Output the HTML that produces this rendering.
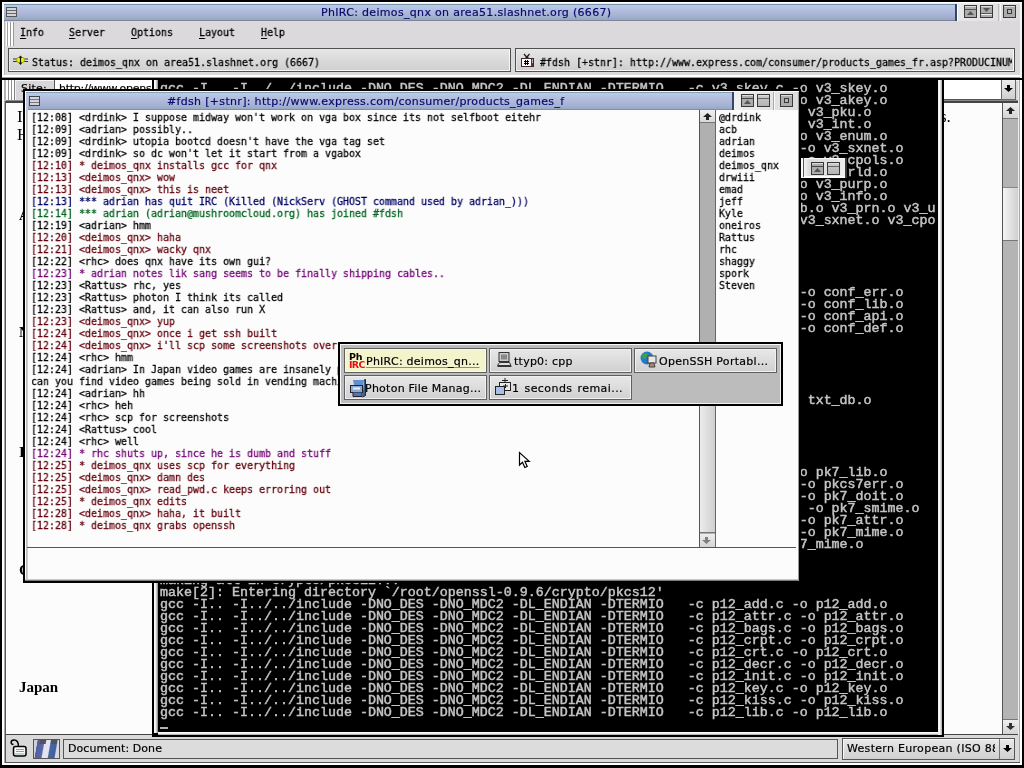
<!DOCTYPE html>
<html><head><meta charset="utf-8"><title>PhIRC</title>
<style>
html,body{margin:0;padding:0}
body{width:1024px;height:768px;position:relative;overflow:hidden;background:#fff;font-family:"DejaVu Sans","Liberation Sans",sans-serif;font-size:11px;color:#000}
div,pre,span{position:absolute;box-sizing:border-box;margin:0;padding:0}
pre span{position:static}
.mono{font-family:"DejaVu Sans Mono","Liberation Mono",monospace;font-size:11px;line-height:12px;white-space:pre;transform:scaleX(0.906);transform-origin:0 0;-webkit-text-stroke:0.3px currentColor}
.term{font-family:"Liberation Mono","DejaVu Sans Mono",monospace;font-size:12.4px;line-height:12px;white-space:pre;color:#c4c4c4;-webkit-text-stroke:0.45px #c4c4c4;transform:scaleX(1.0753);transform-origin:0 0}
.mn u{text-decoration:underline;text-underline-offset:2px;text-decoration-thickness:1px}
.term,.mono,.ttl,.pg{will-change:transform}
.tbar{background:linear-gradient(#b0d0e8,#b6bade 38%,#a2b4d2 72%,#98a4c2)}
.ttl{font-family:"DejaVu Sans","Liberation Sans",sans-serif;font-size:11px;color:#0a0a6a;white-space:pre;-webkit-text-stroke:0.2px currentColor}
.ttl.pl{color:#000;letter-spacing:0.25px}
.wbtn{width:13px;height:13px;background:#acacac;border:1px solid #383838;box-shadow:inset 0 1px 0 #ddd}
</style></head><body>

<!-- ===== BROWSER (bottom layer) ===== -->
<div id="browser" style="left:0;top:0;width:1024px;height:768px;background:#000">
 <div style="left:2px;top:0;width:1020px;height:765px;background:#fff"></div>
 <div style="left:4px;top:0;width:1016px;height:763px;background:#a8a8a8"></div>
 <div style="left:5px;top:0;width:1014px;height:763px;background:#585858"></div>
 <div style="left:6px;top:0;width:1013px;height:762px;background:#d9d9d9"></div>
 <!-- toolbar row -->
 <div style="left:4px;top:80px;width:1015px;height:21px;background:#b4b4b4"></div>
 <div style="left:6px;top:80px;width:1013px;height:21px;background:#d8d6d8"></div>
 <div style="left:6px;top:80px;width:1013px;height:1px;background:#f4f4f4"></div>
 <div style="left:6px;top:80px;width:2px;height:20px;background:#fff"></div>
 <div style="left:8px;top:80px;width:1px;height:20px;background:#909090"></div>
 <div style="left:9px;top:80px;width:2px;height:20px;background:#fff"></div>
 <div style="left:11px;top:80px;width:1px;height:20px;background:#909090"></div>
 <div style="left:12px;top:80px;width:2px;height:20px;background:#fff"></div>
 <div style="left:14px;top:80px;width:1px;height:20px;background:#808080"></div>
 <div style="left:15px;top:80px;width:1px;height:20px;background:#f4f4f4"></div>
 <div class="ttl" style="left:21px;top:82px;color:#000;font-size:11px;letter-spacing:0.2px">Site:</div>
 <div style="left:54px;top:79px;width:948px;height:21px;background:#fff;border:1px solid #555;border-right:none"></div>
 <div class="ttl" style="left:59px;top:82px;color:#000;font-size:11px;letter-spacing:-0.25px;width:93px;overflow:hidden">http://www.opens</div>
 <div style="left:1001px;top:80px;width:15px;height:20px;background:linear-gradient(#ececec,#d0d0d0);border:1px solid #666;border-top:none"></div>
 <svg style="position:absolute;left:1004px;top:85px" width="9" height="7" viewBox="0 0 9 7"><path d="M3 0h3v3h3l-4.500 4-4.500-4h3z" fill="#000"/></svg>
 <div style="left:6px;top:100px;width:1013px;height:1px;background:#888"></div>
 <div style="left:6px;top:101px;width:1013px;height:2px;background:#444"></div>
 <!-- page -->
 <div style="left:6px;top:103px;width:997px;height:631px;background:#fbfcfb"></div>
 <div style="left:6px;top:734px;width:1013px;height:1px;background:#444"></div>
 <!-- page text fragments -->
 <div style="left:17px;top:107px;font:17px 'Liberation Serif',serif" class="pg">I</div>
 <div style="left:17px;top:125px;font:17px 'Liberation Serif',serif" class="pg">H</div>
 <div style="left:19px;top:207px;font:bold 15px 'Liberation Serif',serif" class="pg">A</div>
 <div style="left:19px;top:324px;font:bold 15px 'Liberation Serif',serif" class="pg">N</div>
 <div style="left:19px;top:444px;font:bold 15px 'Liberation Serif',serif" class="pg">I</div>
 <div style="left:19px;top:562px;font:bold 15px 'Liberation Serif',serif" class="pg">C</div>
 <div style="left:19px;top:679px;font:bold 15px 'Liberation Serif',serif" class="pg">Japan</div>
 <div style="left:940px;top:107px;font:17px 'Liberation Serif',serif" class="pg">s.</div>
 <!-- scrollbar -->
 <div style="left:1002px;top:103px;width:1px;height:631px;background:#555"></div>
 <div style="left:1003px;top:103px;width:15px;height:631px;background:#b4b4b4"></div>
 <div style="left:1003px;top:103px;width:15px;height:16px;background:linear-gradient(#eee,#d4d4d4);border-bottom:1px solid #777"></div>
 <svg style="position:absolute;left:1006px;top:107px" width="9" height="7" viewBox="0 0 9 7"><path d="M4.500 0l4.500 4h-3v3h-3v-3h-3z" fill="#222"/></svg>
 <div style="left:1003px;top:187px;width:15px;height:54px;background:linear-gradient(90deg,#f4f4f4,#d0d0d0);border-top:1px solid #888;border-bottom:1px solid #777"></div>
 <div style="left:1003px;top:719px;width:15px;height:15px;background:linear-gradient(#eee,#d4d4d4);border-top:1px solid #777"></div>
 <svg style="position:absolute;left:1006px;top:723px" width="9" height="7" viewBox="0 0 9 7"><path d="M3 0h3v3h3l-4.500 4-4.500-4h3z" fill="#333"/></svg>
 <div style="left:1018px;top:80px;width:1px;height:682px;background:#eee"></div>
 <!-- status bar -->
 <div style="left:6px;top:735px;width:1013px;height:27px;background:#d9d9d9"></div>
 <div style="left:6px;top:762px;width:1014px;height:1px;background:#555"></div>
 <svg style="position:absolute;left:9px;top:738px" width="19" height="20" viewBox="0 0 19 20"><path d="M4.500 6.500C1.500 6.500 1 2 5 2C8.500 2 9.500 4 9.500 8.500" fill="none" stroke="#000" stroke-width="1.500"/><rect x="4.500" y="8.500" width="12.500" height="9.500" rx="2" fill="#f6faf6" stroke="#000" stroke-width="1.500"/><path d="M7 11.500h8M7 13.500h8" stroke="#9a9a9a" stroke-width="1"/><path d="M6 16h9.500" stroke="#b4c8bc" stroke-width="1.500"/></svg>
 <div style="left:33px;top:739px;width:27px;height:20px;background:linear-gradient(100deg,#d0d0d8 0,#d0d0d8 12%,#5060a0 14%,#5868a8 36%,#e4e4f0 40%,#e4e4f0 58%,#4868a0 62%,#4060a0 82%,#d8d8e0 86%);border:1px solid #555"></div>
 <div style="left:34px;top:740px;width:25px;height:4px;background:linear-gradient(100deg,rgba(0,0,0,0) 22%,#50545c 25%,#50545c 46%,rgba(0,0,0,0) 50%,rgba(0,0,0,0) 66%,#50545c 70%,#50545c 88%,rgba(0,0,0,0) 92%)"></div>
 <div style="left:63px;top:739px;width:775px;height:20px;background:#dcdcdc;border:1px solid #555"></div>
 <div class="ttl" style="left:68px;top:742px;color:#000;font-size:11px;letter-spacing:0.06px">Document: Done</div>
 <div style="left:842px;top:738px;width:173px;height:22px;background:linear-gradient(#e8e8e8,#d0d0d0);border:1px solid #555;box-shadow:inset 1px 1px 0 #f8f8f8"></div>
 <div style="left:999px;top:739px;width:1px;height:20px;background:#777"></div>
 <div class="ttl" style="left:847px;top:742px;color:#000;font-size:11px;letter-spacing:0.3px;width:148px;overflow:hidden">Western European (ISO 8859-1)</div>
 <svg style="position:absolute;left:1003px;top:745px" width="9" height="7" viewBox="0 0 9 7"><path d="M3 0h3v3h3l-4.500 4-4.500-4h3z" fill="#000"/></svg>
</div>

<!-- ===== TERMINAL ===== -->
<div id="terminal" style="left:152px;top:60px;width:792px;height:677px;background:#000">
 <div style="left:2px;top:0;width:4px;height:673px;background:linear-gradient(90deg,#fff,#f0f0f0 40%,#888)"></div>
 <div style="left:6px;top:672px;width:782px;height:3px;background:linear-gradient(#fff,#eee 50%,#999)"></div>
 <div style="left:786px;top:0;width:4px;height:675px;background:linear-gradient(90deg,#e8e8e8,#fff 40%,#aaa)"></div>
 <pre class="term" style="left:8px;top:23px">gcc -I.. -I../../include -DNO_DES -DNO_MDC2 -DL_ENDIAN -DTERMIO   -c v3_skey.c -o v3_skey.o
gcc -I.. -I../../include -DNO_DES -DNO_MDC2 -DL_ENDIAN -DTERMIO   -c v3_akey.c -o v3_akey.o
gcc -I.. -I../../include -DNO_DES -DNO_MDC2 -DL_ENDIAN -DTERMIO   -c v3_pku.c -o v3_pku.o
gcc -I.. -I../../include -DNO_DES -DNO_MDC2 -DL_ENDIAN -DTERMIO   -c v3_int.c -o v3_int.o
gcc -I.. -I../../include -DNO_DES -DNO_MDC2 -DL_ENDIAN -DTERMIO   -c v3_enum.c -o v3_enum.o
gcc -I.. -I../../include -DNO_DES -DNO_MDC2 -DL_ENDIAN -DTERMIO   -c v3_sxnet.c -o v3_sxnet.o
gcc -I.. -I../../include -DNO_DES -DNO_MDC2 -DL_ENDIAN -DTERMIO   -c v3_cpols.c -o v3_cpols.o
gcc -I.. -I../../include -DNO_DES -DNO_MDC2 -DL_ENDIAN -DTERMIO   -c v3_crld.c -o v3_crld.o
gcc -I.. -I../../include -DNO_DES -DNO_MDC2 -DL_ENDIAN -DTERMIO   -c v3_purp.c -o v3_purp.o
gcc -I.. -I../../include -DNO_DES -DNO_MDC2 -DL_ENDIAN -DTERMIO   -c v3_info.c -o v3_info.o
ar r ../../libcrypto.a v3_bcons.o v3_bitst.o v3_conf.o v3_extku.o v3_ia5.o v3_lib.o v3_prn.o v3_u
tl.o v3err.o v3_genn.o v3_alt.o v3_skey.o v3_akey.o v3_pku.o v3_int.o v3_enum.o v3_sxnet.o v3_cpo
ls.o v3_crld.o v3_purp.o v3_info.o
ranlib ../../libcrypto.a
make[2]: Leaving directory `/root/openssl-0.9.6/crypto/x509v3'
making all in crypto/conf...
make[2]: Entering directory `/root/openssl-0.9.6/crypto/conf'
gcc -I.. -I../../include -DNO_DES -DNO_MDC2 -DL_ENDIAN -DTERMIO   -c conf_err.c -o conf_err.o
gcc -I.. -I../../include -DNO_DES -DNO_MDC2 -DL_ENDIAN -DTERMIO   -c conf_lib.c -o conf_lib.o
gcc -I.. -I../../include -DNO_DES -DNO_MDC2 -DL_ENDIAN -DTERMIO   -c conf_api.c -o conf_api.o
gcc -I.. -I../../include -DNO_DES -DNO_MDC2 -DL_ENDIAN -DTERMIO   -c conf_def.c -o conf_def.o
ar r ../../libcrypto.a conf_err.o conf_lib.o conf_api.o conf_def.o
ranlib ../../libcrypto.a
make[2]: Leaving directory `/root/openssl-0.9.6/crypto/conf'
making all in crypto/txt_db...
make[2]: Entering directory `/root/openssl-0.9.6/crypto/txt_db'
gcc -I.. -I../../include -DNO_DES -DNO_MDC2 -DL_ENDIAN -DTERMIO   -c txt_db.c -o txt_db.o
ar r ../../libcrypto.a txt_db.o
ranlib ../../libcrypto.a
make[2]: Leaving directory `/root/openssl-0.9.6/crypto/txt_db'
making all in crypto/pkcs7...
make[2]: Entering directory `/root/openssl-0.9.6/crypto/pkcs7'
gcc -I.. -I../../include -DNO_DES -DNO_MDC2 -DL_ENDIAN -DTERMIO   -c pk7_lib.c -o pk7_lib.o
gcc -I.. -I../../include -DNO_DES -DNO_MDC2 -DL_ENDIAN -DTERMIO   -c pkcs7err.c -o pkcs7err.o
gcc -I.. -I../../include -DNO_DES -DNO_MDC2 -DL_ENDIAN -DTERMIO   -c pk7_doit.c -o pk7_doit.o
gcc -I.. -I../../include -DNO_DES -DNO_MDC2 -DL_ENDIAN -DTERMIO   -c pk7_smime.c -o pk7_smime.o
gcc -I.. -I../../include -DNO_DES -DNO_MDC2 -DL_ENDIAN -DTERMIO   -c pk7_attr.c -o pk7_attr.o
gcc -I.. -I../../include -DNO_DES -DNO_MDC2 -DL_ENDIAN -DTERMIO   -c pk7_mime.c -o pk7_mime.o
ar r ../../libcrypto.a pk7_lib.o pkcs7err.o pk7_doit.o pk7_smime.o pk7_attr.o pk7_mime.o
ranlib ../../libcrypto.a
make[2]: Leaving directory `/root/openssl-0.9.6/crypto/pkcs7'
making all in crypto/pkcs12...
make[2]: Entering directory `/root/openssl-0.9.6/crypto/pkcs12'
gcc -I.. -I../../include -DNO_DES -DNO_MDC2 -DL_ENDIAN -DTERMIO   -c p12_add.c -o p12_add.o
gcc -I.. -I../../include -DNO_DES -DNO_MDC2 -DL_ENDIAN -DTERMIO   -c p12_attr.c -o p12_attr.o
gcc -I.. -I../../include -DNO_DES -DNO_MDC2 -DL_ENDIAN -DTERMIO   -c p12_bags.c -o p12_bags.o
gcc -I.. -I../../include -DNO_DES -DNO_MDC2 -DL_ENDIAN -DTERMIO   -c p12_crpt.c -o p12_crpt.o
gcc -I.. -I../../include -DNO_DES -DNO_MDC2 -DL_ENDIAN -DTERMIO   -c p12_crt.c -o p12_crt.o
gcc -I.. -I../../include -DNO_DES -DNO_MDC2 -DL_ENDIAN -DTERMIO   -c p12_decr.c -o p12_decr.o
gcc -I.. -I../../include -DNO_DES -DNO_MDC2 -DL_ENDIAN -DTERMIO   -c p12_init.c -o p12_init.o
gcc -I.. -I../../include -DNO_DES -DNO_MDC2 -DL_ENDIAN -DTERMIO   -c p12_key.c -o p12_key.o
gcc -I.. -I../../include -DNO_DES -DNO_MDC2 -DL_ENDIAN -DTERMIO   -c p12_kiss.c -o p12_kiss.o
gcc -I.. -I../../include -DNO_DES -DNO_MDC2 -DL_ENDIAN -DTERMIO   -c p12_lib.c -o p12_lib.o</pre>
 <div style="left:8px;top:667px;width:8px;height:2px;background:#b0b0b0"></div>
</div>

<!-- ===== PHIRC MAIN ===== -->
<div id="phirc" style="left:0;top:0;width:1024px;height:80px;background:#000">
 <div style="left:2px;top:2px;width:1020px;height:76px;background:#fff"></div>
 <div style="left:2px;top:77px;width:1020px;height:1px;background:#a0a0a0"></div>
 <div style="left:4px;top:3px;width:1016px;height:72px;background:#b8b8b8"></div>
 <div style="left:5px;top:4px;width:1015px;height:71px;background:#dcd9dc"></div>
 <div style="left:1020px;top:3px;width:2px;height:75px;background:#f4f4f4"></div>
 <!-- title bar -->
 <div class="tbar" style="left:4px;top:5px;width:953px;height:15px"></div>
 <div style="left:4px;top:3px;width:1016px;height:1px;background:#e8eef8"></div>
 <div style="left:4px;top:4px;width:953px;height:1px;background:#7890a8"></div>
 <div style="left:4px;top:20px;width:953px;height:1px;background:#808498"></div>
 <div style="left:955px;top:4px;width:2px;height:17px;background:#34446c"></div>
 <div style="left:957px;top:4px;width:1px;height:17px;background:#fff"></div>
 <!-- window menu icon -->
 <div style="left:6px;top:7px;width:11px;height:10px;background:#d4d4d8;border:1px solid #555"></div>
 <div style="left:7px;top:10px;width:9px;height:1px;background:#666"></div>
 <div style="left:7px;top:13px;width:9px;height:1px;background:#666"></div>
 <div class="ttl" style="left:321px;top:6px;letter-spacing:0.32px">PhIRC: deimos_qnx on area51.slashnet.org (6667)</div>
 <!-- window buttons -->
 <div style="left:958px;top:4px;width:62px;height:17px;background:linear-gradient(90deg,#e8e8e8,#dcdcdc)"></div>
 <div style="left:1000px;top:4px;width:1px;height:17px;background:#f8f8f8"></div>
 <div style="left:998px;top:4px;width:1px;height:17px;background:#bbb"></div>
 <div class="wbtn" style="left:964px;top:5px"></div>
 <div style="left:965px;top:9px;width:11px;height:1px;background:#555"></div>
 <svg style="position:absolute;left:967px;top:11px" width="7" height="4"><path d="M3.500 0L7 4H0z" fill="#555"/></svg>
 <div class="wbtn" style="left:980px;top:5px"></div>
 <div style="left:981px;top:13px;width:11px;height:1px;background:#555"></div>
 <div style="left:981px;top:14px;width:11px;height:1px;background:#eee"></div>
 <svg style="position:absolute;left:983px;top:8px" width="7" height="4"><path d="M0 0H7L3.500 4z" fill="#555"/></svg>
 <div class="wbtn" style="left:1003px;top:5px"></div>
 <div style="left:1007px;top:9px;width:5px;height:5px;border:1px solid #383838;background:#b4b4b4"></div>
 <!-- menu bar -->
 <div style="left:6px;top:22px;width:1px;height:24px;background:#fff"></div>
 <div style="left:7px;top:22px;width:1px;height:24px;background:#a0a0a0"></div>
 <div style="left:8px;top:22px;width:2px;height:24px;background:#fff"></div>
 <div style="left:10px;top:22px;width:1px;height:24px;background:#989898"></div>
 <div style="left:11px;top:22px;width:2px;height:24px;background:#fff"></div>
 <div style="left:13px;top:22px;width:1px;height:24px;background:#989898"></div>
 <div class="mono mn" style="left:20px;top:27px"><u>I</u>nfo</div>
 <div class="mono mn" style="left:69px;top:27px"><u>S</u>erver</div>
 <div class="mono mn" style="left:131px;top:27px"><u>O</u>ptions</div>
 <div class="mono mn" style="left:199px;top:27px"><u>L</u>ayout</div>
 <div class="mono mn" style="left:261px;top:27px"><u>H</u>elp</div>
 <!-- buttons -->
 <div style="left:8px;top:48px;width:503px;height:24px;background:linear-gradient(#e6e6e6,#cfcfcf);border:1px solid #505050;box-shadow:inset -1px -1px 0 #f8f8f8,inset 1px 1px 0 #e8e8e8"></div>
 <div style="left:515px;top:48px;width:500px;height:24px;background:linear-gradient(#e6e6e6,#cfcfcf);border:1px solid #505050;box-shadow:inset -1px -1px 0 #f8f8f8,inset 1px 1px 0 #e8e8e8"></div>
 <svg style="position:absolute;left:12px;top:54px" width="18" height="12" viewBox="0 0 18 12"><path d="M1 5h15M1 7.500h15" stroke="#333" stroke-width="1"/><ellipse cx="8.500" cy="6" rx="4" ry="3" fill="#f0f020" stroke="#aa0"/><path d="M8.500 1.500l1.800 2.200h-3.600zM8.500 11l1.800-2.200h-3.600z" fill="#111"/><path d="M8.500 3v6.500" stroke="#111" stroke-width="1.200"/></svg>
 <div class="mono" style="left:32px;top:57px">Status: deimos_qnx on area51.slashnet.org (6667)</div>
 <svg style="position:absolute;left:520px;top:53px" width="15" height="15" viewBox="0 0 15 15"><path d="M4 1L7 4.500M9.500 1L6.500 4.500" stroke="#1c1c1c" stroke-width="1.200" fill="none"/><rect x="5.500" y="3.800" width="3" height="1.600" fill="#2a1c1c"/><rect x="1.500" y="5.500" width="12" height="8" fill="#fff" stroke="#4a2828" stroke-width="1"/><rect x="11" y="6" width="2" height="7" fill="#5a3030"/><rect x="12" y="6.500" width="1" height="1.200" fill="#fff"/><rect x="12" y="8.500" width="1" height="1.200" fill="#fff"/><path d="M5.500 7v5M7.500 7v5M4 8.500h5M4 10.500h5" stroke="#000" stroke-width="1"/></svg>
 <div class="mono" style="left:540px;top:57px;width:521px;overflow:hidden">#fdsh [+stnr]: http://www.express.com/consumer/products_games_fr.asp?PRODUCINUM</div>
</div>

<!-- ===== FDSH WINDOW ===== -->
<div id="fdsh" style="left:23px;top:89px;width:778px;height:494px;background:#000">
 <div style="left:2px;top:2px;width:774px;height:490px;background:#fbfcfb"></div>
 <div style="left:3px;top:2px;width:2px;height:489px;background:linear-gradient(90deg,#b4b4b8,#d8d8dc)"></div>
 <div style="left:2px;top:490px;width:774px;height:1px;background:#c8c8c8"></div>
 <div style="left:2px;top:491px;width:774px;height:1px;background:#7c7c7c"></div>
 <div style="left:775px;top:2px;width:1px;height:490px;background:#9a9a9a"></div>
 <!-- title -->
 <div class="tbar" style="left:3px;top:4px;width:707px;height:17px"></div>
 <div style="left:2px;top:2px;width:774px;height:1px;background:#f4f6fa"></div>
 <div style="left:3px;top:3px;width:707px;height:1px;background:#8e9cb2"></div>
 <div style="left:3px;top:20px;width:707px;height:1px;background:#8090a4"></div>
 <div style="left:3px;top:4px;width:2px;height:17px;background:#bcc8dc"></div>
 <div style="left:6px;top:7px;width:11px;height:10px;background:#d8d4dc;border:1px solid #3c4654"></div>
 <div style="left:7px;top:10px;width:9px;height:1px;background:#777"></div>
 <div style="left:7px;top:13px;width:9px;height:1px;background:#777"></div>
 <div class="ttl" style="left:144px;top:6px;letter-spacing:0.32px;width:398px;overflow:hidden">#fdsh [+stnr]: http://www.express.com/consumer/products_games_fr.asp</div>
 <div style="left:709px;top:3px;width:2px;height:18px;background:#34446c"></div>
 <div style="left:711px;top:3px;width:64px;height:18px;background:linear-gradient(90deg,#f0f0f0,#dcdcdc)"></div>
 <div style="left:751px;top:3px;width:1px;height:18px;background:#fafafa"></div>
 <div style="left:750px;top:3px;width:1px;height:18px;background:#aaa"></div>
 <div class="wbtn" style="left:718px;top:5px"></div>
 <div style="left:719px;top:9px;width:11px;height:1px;background:#444"></div>
 <svg style="position:absolute;left:721px;top:11px" width="7" height="4"><path d="M3.500 0L7 4H0z" fill="#555"/></svg>
 <div class="wbtn" style="left:734px;top:5px;background:linear-gradient(#ccc,#b4b4b4)"></div>
 <div style="left:735px;top:9px;width:11px;height:1px;background:#666"></div>
 <div class="wbtn" style="left:757px;top:5px"></div>
 <div style="left:761px;top:9px;width:5px;height:5px;border:1px solid #383838;background:#b4b4b4"></div>
 <!-- text -->
 <pre class="mono" style="left:8px;top:23px">[12:08] &lt;drdink&gt; I suppose midway won't work on vga box since its not selfboot eitehr
[12:09] &lt;adrian&gt; possibly..
[12:09] &lt;drdink&gt; utopia bootcd doesn't have the vga tag set
[12:09] &lt;drdink&gt; so dc won't let it start from a vgabox
<span style="color:#64000e">[12:10] * deimos_qnx installs gcc for qnx</span>
<span style="color:#64000e">[12:13] &lt;deimos_qnx&gt; wow</span>
<span style="color:#64000e">[12:13] &lt;deimos_qnx&gt; this is neet</span>
<span style="color:#000064">[12:13] *** adrian has quit IRC (Killed (NickServ (GHOST command used by adrian_)))</span>
<span style="color:#046420">[12:14] *** adrian (adrian@mushroomcloud.org) has joined #fdsh</span>
[12:19] &lt;adrian&gt; hmm
<span style="color:#64000e">[12:20] &lt;deimos_qnx&gt; haha</span>
<span style="color:#64000e">[12:21] &lt;deimos_qnx&gt; wacky qnx</span>
[12:22] &lt;rhc&gt; does qnx have its own gui?
<span style="color:#740478">[12:23] * adrian notes lik sang seems to be finally shipping cables..</span>
[12:23] &lt;Rattus&gt; rhc, yes
[12:23] &lt;Rattus&gt; photon I think its called
[12:23] &lt;Rattus&gt; and, it can also run X
<span style="color:#64000e">[12:23] &lt;deimos_qnx&gt; yup</span>
<span style="color:#64000e">[12:24] &lt;deimos_qnx&gt; once i get ssh built</span>
<span style="color:#64000e">[12:24] &lt;deimos_qnx&gt; i'll scp some screenshots over</span>
[12:24] &lt;rhc&gt; hmm
[12:24] &lt;adrian&gt; In Japan video games are insanely popular, in some parts of the city
can you find video games being sold in vending machines
[12:24] &lt;adrian&gt; hh
[12:24] &lt;rhc&gt; heh
[12:24] &lt;rhc&gt; scp for screenshots
[12:24] &lt;Rattus&gt; cool
[12:24] &lt;rhc&gt; well
<span style="color:#740478">[12:24] * rhc shuts up, since he is dumb and stuff</span>
<span style="color:#64000e">[12:25] * deimos_qnx uses scp for everything</span>
<span style="color:#64000e">[12:25] &lt;deimos_qnx&gt; damn des</span>
<span style="color:#64000e">[12:25] &lt;deimos_qnx&gt; read_pwd.c keeps erroring out</span>
<span style="color:#64000e">[12:25] * deimos_qnx edits</span>
<span style="color:#64000e">[12:28] &lt;deimos_qnx&gt; haha, it built</span>
<span style="color:#64000e">[12:28] * deimos_qnx grabs openssh</span></pre>
 <!-- scrollbar -->
 <div style="left:676px;top:21px;width:1px;height:437px;background:#555"></div>
 <div style="left:677px;top:21px;width:15px;height:437px;background:#b0b0b0"></div>
 <div style="left:692px;top:21px;width:1px;height:437px;background:#666"></div>
 <div style="left:677px;top:21px;width:15px;height:13px;background:linear-gradient(#f0f0f0,#d8d8d8);border-bottom:1px solid #777"></div>
 <svg style="position:absolute;left:680px;top:24px" width="9" height="7" viewBox="0 0 9 7"><path d="M4.500 0l4.500 4h-3v3h-3v-3h-3z" fill="#222"/></svg>
 <div style="left:677px;top:291px;width:15px;height:153px;background:linear-gradient(90deg,#ececec,#cfcfcf);border-bottom:1px solid #777"></div>
 <div style="left:677px;top:445px;width:15px;height:13px;background:linear-gradient(#eee,#d4d4d4)"></div>
 <svg style="position:absolute;left:679px;top:448px" width="9" height="7" viewBox="0 0 9 7"><path d="M3 0h3v3h3l-4.500 4-4.500-4h3z" fill="#808080"/></svg>
 <!-- nick list -->
 <pre class="mono" style="left:696px;top:23px">@drdink
acb
adrian
deimos
deimos_qnx
drwiii
emad
jeff
Kyle
oneiros
Rattus
rhc
shaggy
spork
Steven</pre>
 <div style="left:4px;top:458px;width:769px;height:1px;background:#555"></div>
</div>

<!-- ===== POPUP ===== -->
<div id="popup" style="left:338px;top:342px;width:445px;height:64px;background:#000">
 <div style="left:2px;top:2px;width:441px;height:60px;background:#f8f8f8"></div>
 <div style="left:3px;top:3px;width:440px;height:59px;background:#f0f0f0"></div>
 <div style="left:3px;top:3px;width:439px;height:58px;background:#bcbcbc"></div>
 <div style="left:6px;top:6px;width:143px;height:25px;background:#f3f3cc;border:1px solid #606060;box-shadow:inset 0 0 0 1px #fafae0"></div>
 <div style="left:151px;top:6px;width:143px;height:25px;background:linear-gradient(#e8e8e8,#d0d0d0);border:1px solid #606060;box-shadow:inset 0 0 0 1px #f0f0f0"></div>
 <div style="left:296px;top:6px;width:143px;height:25px;background:linear-gradient(#e8e8e8,#d0d0d0);border:1px solid #606060;box-shadow:inset 0 0 0 1px #f0f0f0"></div>
 <div style="left:6px;top:33px;width:143px;height:25px;background:linear-gradient(#e8e8e8,#d0d0d0);border:1px solid #606060;box-shadow:inset 0 0 0 1px #f0f0f0"></div>
 <div style="left:151px;top:33px;width:143px;height:25px;background:linear-gradient(#e8e8e8,#d0d0d0);border:1px solid #606060;box-shadow:inset 0 0 0 1px #f0f0f0"></div>
 <!-- icons -->
 <div style="left:11px;top:11px;font:bold 9.5px/8px 'DejaVu Sans','Liberation Sans',sans-serif;color:#000;letter-spacing:-0.2px" class="pg">Ph</div>
 <div style="left:11px;top:19px;font:bold 9.5px/8px 'DejaVu Sans','Liberation Sans',sans-serif;color:#e01010;letter-spacing:-0.7px" class="pg">IRC</div>
 <svg style="position:absolute;left:157px;top:9px" width="18" height="18" viewBox="0 0 18 18"><rect x="4" y="1.500" width="10" height="9" fill="#c8c8c8" stroke="#333"/><rect x="6" y="3.500" width="6" height="5" fill="#888"/><path d="M2.500 14.500l2-3h10l1.500 3z" fill="#ddd" stroke="#333"/><path d="M2.500 15.500h14" stroke="#333"/></svg>
 <svg style="position:absolute;left:301px;top:8px" width="20" height="20" viewBox="0 0 20 20"><circle cx="8" cy="8" r="6.500" fill="#2878c8"/><path d="M3 5q3-3 6-1l-2 4-3 1zM9 9l4-3 1 5-3 2z" fill="#38a838"/><rect x="9" y="6" width="8" height="7" fill="#e8e8e8" stroke="#444"/><path d="M11 13l-1 4h6l-1-4z" fill="#b08868" stroke="#444"/></svg>
 <svg style="position:absolute;left:11px;top:36px" width="20" height="20" viewBox="0 0 20 20"><path d="M4 2h11l-1 5H5z" fill="#6090d0"/><path d="M15 2l1.500-.5v16l-3 1.500" fill="#406090" stroke="#223" stroke-width="1"/><rect x="1.500" y="7.500" width="12" height="7" fill="#90a8d0" stroke="#223"/><rect x="4" y="9.500" width="7" height="2" fill="#e8f0ff"/><path d="M4 14.500v4h9v-4" fill="#5078b0" stroke="#223"/></svg>
 <svg style="position:absolute;left:155px;top:35px" width="20" height="20" viewBox="0 0 20 20"><rect x="6.500" y="5.500" width="11" height="8" fill="#e8e8e8" stroke="#222"/><rect x="2.500" y="9.500" width="9" height="8" fill="#a8c0e8" stroke="#222"/><path d="M9 3.500h6M12 1v5" stroke="#222"/><path d="M10 9h5M12.500 7v4" stroke="#222"/></svg>
 <!-- labels -->
 <div class="ttl pl" style="left:28px;top:13px"><span style="position:static;text-decoration:underline;text-decoration-color:#8484c8;text-underline-offset:2px;text-decoration-thickness:1px">PhIRC: deimos_qn...</span></div>
 <div class="ttl pl" style="left:176px;top:13px">ttyp0: cpp</div>
 <div class="ttl pl" style="left:321px;top:13px;letter-spacing:0.28px">OpenSSH Portabl...</div>
 <div class="ttl pl" style="left:27px;top:40px">Photon File Manag...</div>
 <div class="ttl pl" style="left:174px;top:40px;letter-spacing:0.42px;word-spacing:1.2px">1 seconds remai...</div>
</div>
<!-- floating buttons -->
<div id="floatbtns" style="left:801px;top:158px;width:47px;height:20px;background:#000">
 <div style="left:0;top:0;width:44px;height:20px;background:linear-gradient(90deg,#fff,#dcdcdc 18%,#e4e4e4 80%,#f0f0f0)"></div>
 <div style="left:0;top:0;width:44px;height:1px;background:#f8f8f8"></div>
 <div style="left:0;top:18px;width:44px;height:2px;background:#fbfbfb"></div>
 <div style="left:2px;top:0;width:1px;height:19px;background:#555"></div>
 <div style="left:44px;top:0;width:2px;height:20px;background:#3a3a3a"></div>
 <div class="wbtn" style="left:10px;top:4px"></div>
 <div style="left:11px;top:8px;width:11px;height:1px;background:#444"></div>
 <svg style="position:absolute;left:13px;top:10px" width="7" height="4"><path d="M3.500 0L7 4H0z" fill="#555"/></svg>
 <div class="wbtn" style="left:26px;top:4px;background:linear-gradient(#ccc,#b4b4b4)"></div>
 <div style="left:27px;top:8px;width:11px;height:1px;background:#666"></div>
</div>
<!-- mouse cursor -->
<svg style="position:absolute;left:518px;top:451px" width="13" height="19" viewBox="0 0 13 19"><path d="M1.500 1.500v12.500l3-2.800 2.300 5.300 2.400-1-2.300-5.200h4.300z" fill="#fff" stroke="#000" stroke-width="1.200"/></svg>

</body></html>
